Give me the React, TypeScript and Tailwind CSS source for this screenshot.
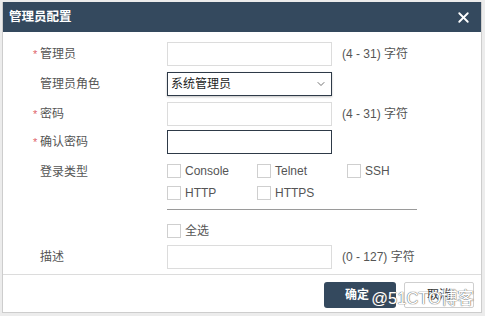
import { ChevronDown, X } from "lucide-react";

const font = { fontFamily: '"Liberation Sans", "Noto Sans CJK SC", sans-serif' };

function Label({ text, req }: { text: string; req?: boolean }) {
  return (
    <div className="flex items-center w-[164px] pl-[30px] text-[12px] text-[#555]">
      <span className="w-[7px] text-[#e0646a] text-[11px]">{req ? "*" : ""}</span>
      <span>{text}</span>
    </div>
  );
}

function Box({ label }: { label: string }) {
  return (
    <div className="flex items-center w-[90px]">
      <span className="w-[14px] h-[14px] border border-[#cfcfcf] bg-white mr-[4px]" />
      <span className="text-[12px] text-[#555]">{label}</span>
    </div>
  );
}

export default function App() {
  return (
    <div className="w-[485px] h-[316px] bg-[#ececec] pt-[2px] pl-[2px]" style={font}>
      <div className="w-[480px] h-[311px] bg-white border-x border-b border-[#cdcdcd] flex flex-col">
        {/* header */}
        <div className="h-[30px] bg-[#34495e] flex items-center justify-between pl-[6px] pr-[9px]">
          <span className="text-white font-bold text-[12.5px]">管理员配置</span>
          <X size={17} strokeWidth={2.6} className="text-white" />
        </div>
        {/* body */}
        <div className="flex-1 flex flex-col pt-[10px]">
          <div className="flex items-center h-[24px]">
            <Label text="管理员" req />
            <div className="w-[165px] h-[24px] border border-[#dcdcdc]" />
            <span className="ml-[10px] text-[12px] text-[#555]">(4 - 31) 字符</span>
          </div>
          <div className="flex items-center h-[24px] mt-[6px]">
            <Label text="管理员角色" />
            <div className="w-[165px] h-[24px] border border-[#2e3a48] flex items-center justify-between pl-[3px] pr-[4px] shadow-[0_1px_2px_rgba(0,0,0,0.25)]">
              <span className="text-[12px] text-[#222]">系统管理员</span>
              <ChevronDown size={12} strokeWidth={1.5} className="text-[#444]" />
            </div>
          </div>
          <div className="flex items-center h-[24px] mt-[6px]">
            <Label text="密码" req />
            <div className="w-[165px] h-[24px] border border-[#dcdcdc]" />
            <span className="ml-[10px] text-[12px] text-[#555]">(4 - 31) 字符</span>
          </div>
          <div className="flex items-center h-[24px] mt-[4px]">
            <Label text="确认密码" req />
            <div className="w-[165px] h-[24px] border border-[#2e3a48]" />
          </div>
          <div className="flex mt-[9px]">
            <div className="pt-[0px]">
              <Label text="登录类型" />
            </div>
            <div className="flex flex-col">
              <div className="flex h-[16px]">
                <Box label="Console" />
                <Box label="Telnet" />
                <Box label="SSH" />
              </div>
              <div className="flex h-[16px] mt-[6px]">
                <Box label="HTTP" />
                <Box label="HTTPS" />
              </div>
              <div className="w-[250px] h-[1px] bg-[#9a9a9a] mt-[8px]" />
              <div className="flex h-[16px] mt-[13px]">
                <Box label="全选" />
              </div>
            </div>
          </div>
          <div className="flex items-center h-[24px] mt-[6px]">
            <Label text="描述" />
            <div className="w-[165px] h-[24px] border border-[#dcdcdc]" />
            <span className="ml-[10px] text-[12px] text-[#555]">(0 - 127) 字符</span>
          </div>
        </div>
        {/* footer */}
        <div className="h-[38px] border-t border-[#dcdcdc] flex justify-end items-start pt-[7px] pr-[7px] gap-[8px] relative">
          <div className="w-[72px] h-[26px] bg-[#34495e] rounded-[3px] flex items-center justify-center text-white text-[12px] font-bold pr-[6px]">确定</div>
          <div className="w-[70px] h-[26px] border border-[#cfcfcf] rounded-[2px] bg-white flex items-center justify-center text-[12px] text-[#333]">取消</div>
          <span className="absolute right-[7px] top-[11px] text-[16.5px] text-white [text-shadow:0_0_1px_#555,0_0_1px_#555]">@51CTO博客</span>
        </div>
      </div>
    </div>
  );
}
